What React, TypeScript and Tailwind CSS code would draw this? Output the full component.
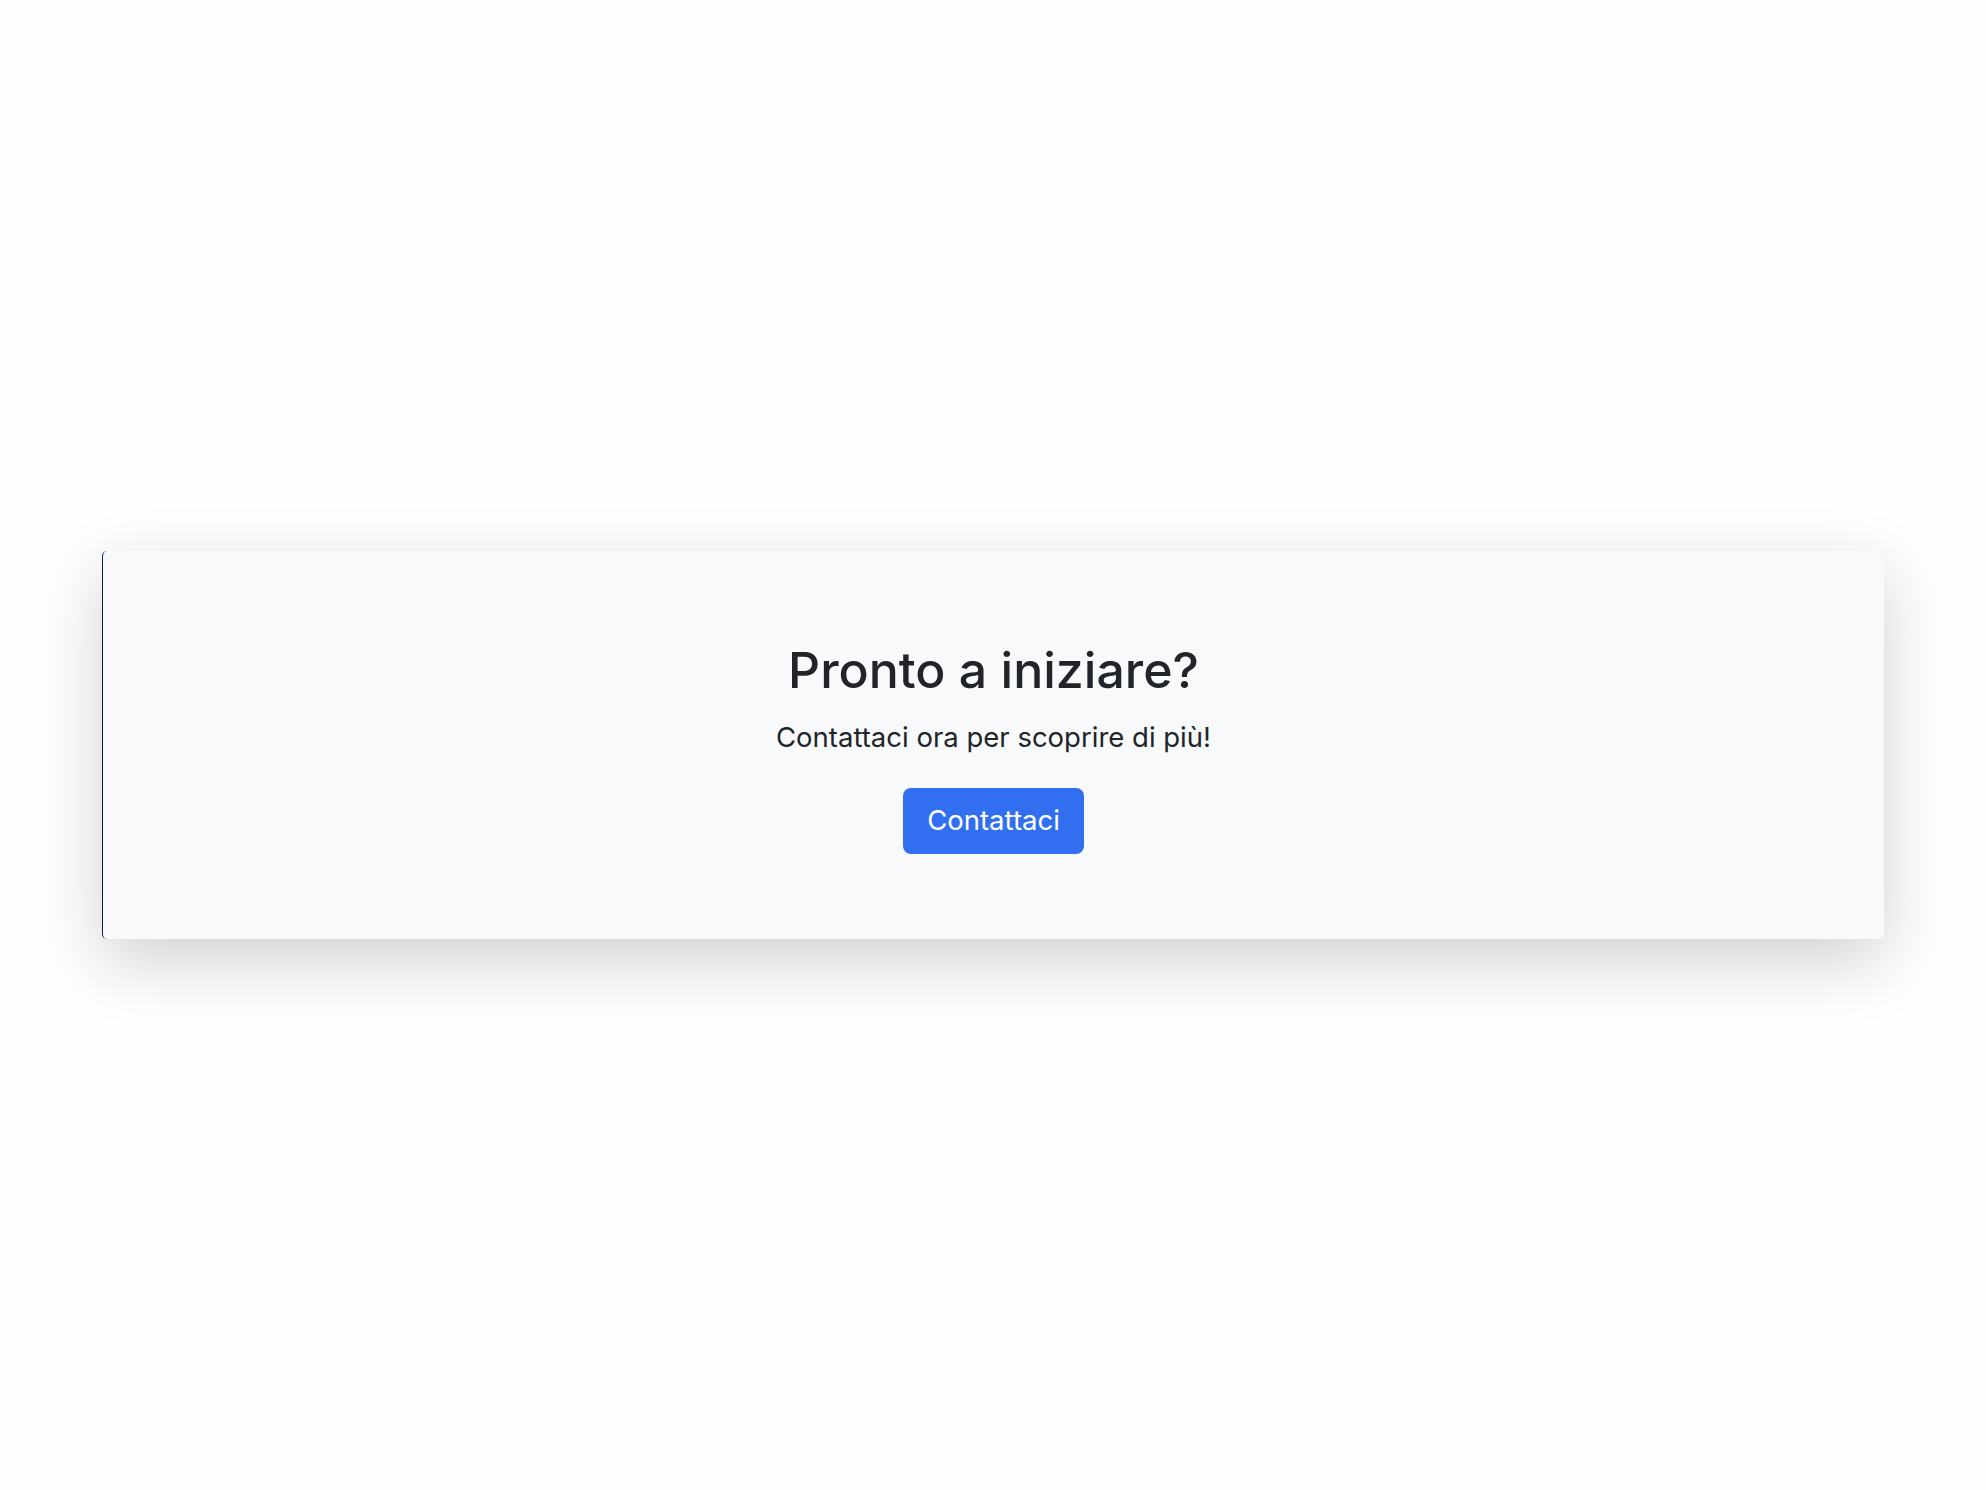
const App = () => {
    return (
        <div className="min-h-screen flex items-center px-[102px] bg-[#fefefe]" style={{ fontFamily: 'Inter, "Liberation Sans", sans-serif' }}>
            <div className="w-full bg-[#f8f9fa] rounded-[5px] border-l border-[#0b1f44] shadow-[0_22px_66px_rgba(0,0,0,0.175)] pt-[89px] pb-[85px] text-center">
                <h2 className="text-[50px] leading-[60px] font-medium text-[#212529] mb-[17.5px]">Pronto a iniziare?</h2>
                <p className="text-[27.5px] leading-[1.5] text-[#212529] mb-[29.25px]">Contattaci ora per scoprire di più!</p>
                <button className="bg-[#316ff0] text-white text-[27.5px] leading-[1.5] px-[24.5px] py-[12.5px] rounded-[8px]">Contattaci</button>
            </div>
        </div>
    )
}

export default App
